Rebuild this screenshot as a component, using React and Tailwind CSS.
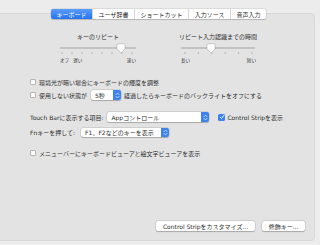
import React from "react";

function Thumb({ cx }) {
  const l = cx - 4, r = cx + 4;
  return (
    <path
      d={`M${l + 1} 0.8 L${r - 1} 0.8 Q${r} 0.8 ${r} 1.8 L${r} 6 L${cx} 10 L${l} 6 L${l} 1.8 Q${l} 0.8 ${l + 1} 0.8 Z`}
      fill="#ffffff"
      stroke="rgba(0,0,0,0.28)"
      strokeWidth="0.6"
    />
  );
}

function Slider({ width, ticks, thumb }) {
  return (
    <svg width={width} height="12" viewBox={`0 0 ${width} 12`} className="block">
      <line x1="1.5" y1="5" x2={width - 1.5} y2="5" stroke="#b9b9b9" strokeWidth="1.6" strokeLinecap="round" />
      {ticks.map((x, i) => (
        <line key={i} x1={x} y1="9.2" x2={x} y2="11" stroke="#9c9c9c" strokeWidth="0.7" />
      ))}
      <Thumb cx={thumb} />
    </svg>
  );
}

function Checkbox({ checked }) {
  if (checked) {
    return (
      <div className="w-[7px] h-[7px] rounded-[1.5px] bg-[#3b83f2] flex items-center justify-center shrink-0">
        <svg width="6" height="6" viewBox="0 0 6 6">
          <path d="M1.2 3.2 L2.5 4.5 L4.9 1.3" fill="none" stroke="#fff" strokeWidth="0.9" strokeLinecap="round" strokeLinejoin="round" />
        </svg>
      </div>
    );
  }
  return <div className="w-[6px] h-[6px] rounded-[1px] bg-white border-[0.5px] border-[#b4b4b4] shrink-0" />;
}

function Stepper() {
  return (
    <div className="w-[8px] h-full rounded-r-[2px] bg-[#3d82f0] flex items-center justify-center shrink-0">
      <svg width="5" height="7" viewBox="0 0 5 7">
        <path d="M1 2.6 L2.5 1.1 L4 2.6 M1 4.4 L2.5 5.9 L4 4.4" fill="none" stroke="#fff" strokeWidth="0.7" strokeLinecap="round" strokeLinejoin="round" />
      </svg>
    </div>
  );
}

function Popup({ w, label, h = "h-[10px]" }) {
  return (
    <div className={`${w} ${h} bg-white rounded-[2px] shadow-[0_0_0_0.5px_rgba(0,0,0,0.14),0_0.5px_1px_rgba(0,0,0,0.2)] flex items-center shrink-0`}>
      <div className="flex-1 pl-[4px] whitespace-nowrap overflow-hidden">{label}</div>
      <Stepper />
    </div>
  );
}

function Button({ w, label }) {
  return (
    <div className={`${w} h-[10px] bg-white rounded-[2px] shadow-[0_0_0_0.5px_rgba(0,0,0,0.14),0_0.5px_1px_rgba(0,0,0,0.2)] flex items-center justify-center whitespace-nowrap`}>
      {label}
    </div>
  );
}

const tabs = [
  { label: "キーボード", w: "w-[41px]", active: true },
  { label: "ユーザ辞書", w: "w-[42px]" },
  { label: "ショートカット", w: "w-[54px]" },
  { label: "入力ソース", w: "w-[42px]" },
  { label: "音声入力", w: "w-[36px]" },
];

export default function App() {
  return (
    <div className="w-[320px] h-[245px] bg-[#ececec] overflow-hidden text-[6px] leading-[7px] text-[#2e2e2e] font-['DejaVu_Sans','Noto_Sans_CJK_JP',sans-serif]">
      <div className="pt-[9px] pl-[51px] relative z-10 flex">
        <div className="flex h-[10px] rounded-[2px] bg-white shadow-[0_0_0_0.5px_rgba(0,0,0,0.12),0_0.5px_1px_rgba(0,0,0,0.15)] overflow-hidden">
          {tabs.map((t, i) => (
            <div
              key={i}
              className={`${t.w} h-full flex items-center justify-center whitespace-nowrap ${
                t.active
                  ? "bg-gradient-to-b from-[#5b9cf8] to-[#2472ef] text-white"
                  : "border-l-[0.5px] border-[#d4d4d4] text-[#2e2e2e]"
              }`}
            >
              {t.label}
            </div>
          ))}
        </div>
      </div>

      <div className="-mt-[6px] -ml-[3px] w-[318px] h-[228px] bg-[#e3e3e3] border border-[#d8d8d8] rounded-[4px] pt-[19px] pl-[32px] flex flex-col">
        {/* sliders */}
        <div className="flex ml-[29px] gap-[43px]">
          <div className="w-[78px] flex flex-col items-center">
            <div className="whitespace-nowrap h-[7px]">キーのリピート</div>
            <div className="mt-[3px]">
              <Slider width={78} ticks={[3, 13, 23, 33, 43, 53, 63, 73]} thumb={62} />
            </div>
            <div className="mt-[3px] w-full flex text-[4.6px] leading-[6px] text-[#3a3a3a] pl-[1px] pr-[1px]">
              <span>オフ</span>
              <span className="ml-[4px]">遅い</span>
              <span className="ml-auto">速い</span>
            </div>
          </div>
          <div className="w-[76px] flex flex-col items-center">
            <div className="whitespace-nowrap h-[7px]">リピート入力認識までの時間</div>
            <div className="mt-[3px]">
              <Slider width={76} ticks={[5, 18.4, 31.8, 45.2, 58.6, 72]} thumb={31} />
            </div>
            <div className="mt-[3px] w-full flex justify-between text-[4.6px] leading-[6px] text-[#3a3a3a] pl-[1px]">
              <span>長い</span>
              <span>短い</span>
            </div>
          </div>
        </div>

        {/* row 1 */}
        <div className="mt-[14px] h-[8px] flex items-center gap-[3px]">
          <Checkbox />
          <span className="whitespace-nowrap">環境光が暗い場合にキーボードの輝度を調整</span>
        </div>

        {/* row 2 */}
        <div className="mt-[4px] h-[10px] flex items-center">
          <Checkbox />
          <span className="ml-[3px] whitespace-nowrap">使用しない状態が</span>
          <div className="ml-[4px]">
            <Popup w="w-[30px]" label="5秒" />
          </div>
          <span className="ml-[3px] whitespace-nowrap">経過したらキーボードのバックライトをオフにする</span>
        </div>

        {/* row 3 */}
        <div className="mt-[12px] h-[10px] flex items-center">
          <span className="whitespace-nowrap">Touch Barに表示する項目:</span>
          <div className="ml-[4px]">
            <Popup w="w-[102px]" label="Appコントロール" />
          </div>
          <div className="ml-[9px]">
            <Checkbox checked />
          </div>
          <span className="ml-[2px] whitespace-nowrap">Control Stripを表示</span>
        </div>

        {/* row 4 */}
        <div className="mt-[5px] h-[10px] flex items-center">
          <span className="whitespace-nowrap">Fnキーを押して:</span>
          <div className="ml-[6px]">
            <Popup w="w-[88px]" h="h-[9px]" label="F1、F2などのキーを表示" />
          </div>
        </div>

        {/* row 5 */}
        <div className="mt-[12px] h-[8px] flex items-center gap-[3px]">
          <Checkbox />
          <span className="whitespace-nowrap">メニューバーにキーボードビューアと絵文字ビューアを表示</span>
        </div>

        {/* buttons */}
        <div className="mt-auto mb-[9px] flex justify-end gap-[7px] pr-[9px]">
          <Button w="w-[99px]" label="Control Stripをカスタマイズ..." />
          <Button w="w-[43px]" label="修飾キー..." />
        </div>
      </div>
    </div>
  );
}
